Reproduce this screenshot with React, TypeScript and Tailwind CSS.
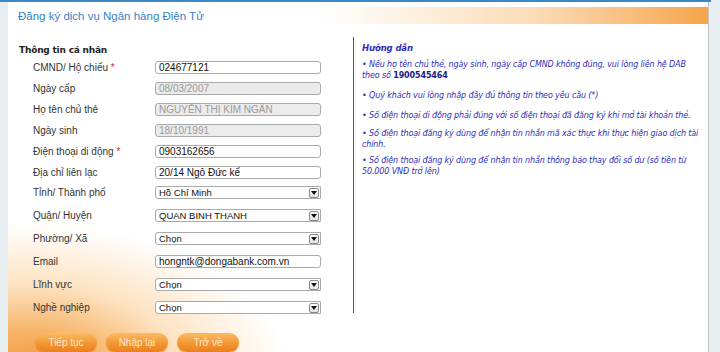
import React from "react";

const label = "text-[10px] text-[#333] font-['Liberation_Sans',Arial,sans-serif]";

function TextRow({ name, value, req, disabled }: { name: string; value: string; req?: boolean; disabled?: boolean }) {
  return (
    <div className="flex items-center h-[21px] pl-[25px]">
      <div className={`w-[122px] ${label}`}>
        {name}
        {req && <span className="text-[#e0202a]"> *</span>}
      </div>
      <div
        className={`w-[166px] h-[13px] border border-[#a9a9a9] rounded-[3px] pl-[3px] flex items-center text-[10px] leading-none font-['Liberation_Sans',Arial,sans-serif] ${
          disabled ? "bg-[#ebebeb] text-[#9a9a9a]" : "bg-white text-[#111]"
        }`}
      >
        {value}
      </div>
    </div>
  );
}

function SelectRow({ name, value, first }: { name: string; value: string; first?: boolean }) {
  return (
    <div className={`flex items-center h-[23px] pl-[25px] ${first ? "-mt-[2px]" : ""}`}>
      <div className={`w-[122px] ${label}`}>{name}</div>
      <div className="w-[166px] h-[13px] border border-[#a9a9a9] rounded-l-[3px] bg-white pl-[3px] flex items-center justify-between text-[9.5px] leading-none text-[#111] font-['Liberation_Sans',Arial,sans-serif]">
        <span>{value}</span>
        <span className="w-[10px] h-[10px] mr-[1px] border border-[#8a8a8a] rounded-[2px] bg-gradient-to-b from-white to-[#e2e2e2] flex items-center justify-center">
          <svg width="6" height="4" viewBox="0 0 6 4">
            <path d="M0 0h6L3 4z" fill="#111" />
          </svg>
        </span>
      </div>
    </div>
  );
}

function Btn({ text }: { text: string }) {
  return (
    <div className="w-[62px] h-[19px] rounded-full bg-gradient-to-b from-[#fbbb62] via-[#f49a36] to-[#ea7f1c] flex items-center justify-center text-[10px] text-[#fde6c6] font-['Liberation_Sans',Arial,sans-serif] shadow-[0_1px_1px_rgba(180,90,0,0.4)]">
      {text}
    </div>
  );
}

export default function App() {
  return (
    <div className="w-[720px] h-[352px] overflow-hidden bg-[#e7eef1]">
      <div className="h-[2px] w-[711px] bg-[#3f86c4]" />
      <div className="ml-[8px] w-[701px] h-[350px] bg-white border-r border-[#c4c4c4] bg-[radial-gradient(ellipse_260px_150px_at_20px_372px,#f29330_0%,#f7b66c_30%,#fde3c2_60%,rgba(255,255,255,0)_100%)]">
        <div className="h-[5px]" />
        <div className="h-[17px] bg-gradient-to-r from-white from-45% via-[#fbdcb6] via-75% to-[#f6a446] flex items-center pl-[10px] pt-[3px]">
          <span className="text-[11.5px] text-[#3b7fc3] font-['Liberation_Sans',Arial,sans-serif]">
            Đăng ký dịch vụ Ngân hàng Điện Tử
          </span>
        </div>
        <div className="flex mt-[13px]">
          <div className="w-[345px]">
            <div className="pt-[7px] pl-[11px] h-[20px] flex items-center">
              <span className="text-[9px] font-bold text-[#222] font-['DejaVu_Sans',Tahoma,sans-serif] tracking-[-0.2px]">
                Thông tin cá nhân
              </span>
            </div>
            <TextRow name="CMND/ Hộ chiếu" value="024677121" req />
            <TextRow name="Ngày cấp" value="08/03/2007" disabled />
            <TextRow name="Họ tên chủ thẻ" value="NGUYỄN THỊ KIM NGÂN" disabled />
            <TextRow name="Ngày sinh" value="18/10/1991" disabled />
            <TextRow name="Điện thoại di động" value="0903162656" req />
            <TextRow name="Địa chỉ liên lạc" value="20/14 Ngô Đức kế" />
            <SelectRow name="Tỉnh/ Thành phố" value="Hồ Chí Minh" first />
            <SelectRow name="Quận/ Huyện" value="QUAN BINH THANH" />
            <SelectRow name="Phường/ Xã" value="Chọn" />
            <div className="flex items-center h-[23px] pl-[25px]">
              <div className={`w-[122px] ${label}`}>Email</div>
              <div className="w-[166px] h-[13px] border border-[#a9a9a9] rounded-[3px] pl-[3px] flex items-center text-[10px] leading-none bg-white text-[#111] font-['Liberation_Sans',Arial,sans-serif]">
                hongntk@dongabank.com.vn
              </div>
            </div>
            <SelectRow name="Lĩnh vực" value="Chọn" />
            <SelectRow name="Nghề nghiệp" value="Chọn" />
            <div className="flex gap-[9px] pl-[27px] mt-[14px]">
              <Btn text="Tiếp tục" />
              <Btn text="Nhập lại" />
              <Btn text="Trở về" />
            </div>
          </div>
          <div className="w-[355px] h-[276px] border-l border-[#555] pl-[8px] pt-[6px] text-[8px] leading-[11px] italic text-[#2d2dbb] font-['DejaVu_Sans',Tahoma,sans-serif] tracking-[-0.12px] whitespace-nowrap">
            <div className="font-bold text-[8.5px] mb-[5px]">Hướng dẫn</div>
            <div className="mb-[9px]">
              • Nếu họ tên chủ thẻ, ngày sinh, ngày cấp CMND không đúng, vui lòng liên hệ DAB
              <br />
              theo số <span className="font-bold text-[#1a1a8a] not-italic">1900545464</span>
            </div>
            <div className="mb-[9px]">• Quý khách vui lòng nhập đầy đủ thông tin theo yêu cầu (*)</div>
            <div className="mb-[7px]">• Số điện thoại di động phải đúng với số điện thoại đã đăng ký khi mở tài khoản thẻ.</div>
            <div className="mb-[5px]">
              • Số điện thoại đăng ký dùng để nhận tin nhắn mã xác thực khi thực hiện giao dịch tài
              <br />
              chính.
            </div>
            <div>
              • Số điện thoại đăng ký dùng để nhận tin nhắn thông báo thay đổi số dư (số tiền từ
              <br />
              50.000 VNĐ trở lên)
            </div>
          </div>
        </div>
      </div>
    </div>
  );
}
